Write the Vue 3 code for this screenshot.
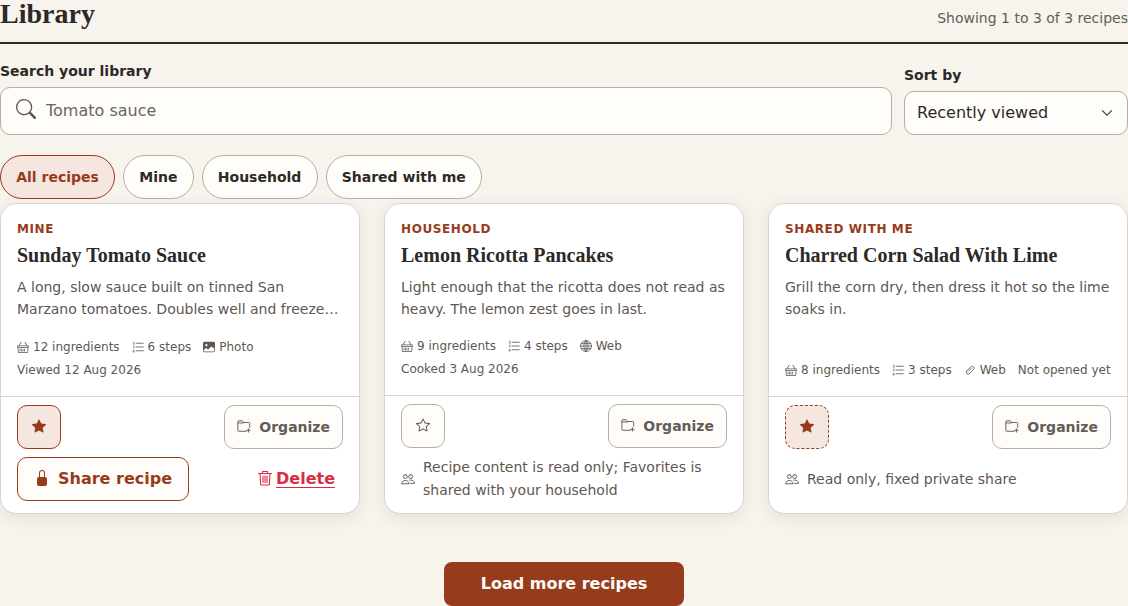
<script setup>
const icons = {
  search: { fill: true, d: 'M11.742 10.344a6.5 6.5 0 1 0-1.397 1.398h-.001q.044.06.098.115l3.85 3.85a1 1 0 0 0 1.415-1.414l-3.85-3.85a1 1 0 0 0-.115-.1zM12 6.5a5.5 5.5 0 1 1-11 0 5.5 5.5 0 0 1 11 0' },
  chevron: { fill: true, d: 'M1.646 4.646a.5.5 0 0 1 .708 0L8 10.293l5.646-5.647a.5.5 0 0 1 .708.708l-6 6a.5.5 0 0 1-.708 0l-6-6a.5.5 0 0 1 0-.708' },
  starFill: { fill: true, d: 'M3.612 15.443c-.386.198-.824-.149-.746-.592l.83-4.73L.173 6.765c-.329-.314-.158-.888.283-.95l4.898-.696L7.538.792c.197-.39.73-.39.927 0l2.184 4.327 4.898.696c.441.062.612.636.282.95l-3.522 3.356.83 4.73c.078.443-.36.79-.746.592L8 13.187l-4.389 2.256z' },
  star: { fill: true, d: 'M2.866 14.85c-.078.444.36.791.746.593l4.39-2.256 4.389 2.256c.386.198.824-.149.746-.592l-.83-4.73 3.522-3.356c.33-.314.16-.888-.282-.95l-4.898-.696L8.465.792a.513.513 0 0 0-.927 0L5.354 5.12l-4.898.696c-.441.062-.612.636-.283.95l3.523 3.356-.83 4.73zm4.905-2.767-3.686 1.894.694-3.957a.56.56 0 0 0-.163-.505L1.71 6.745l4.052-.576a.53.53 0 0 0 .393-.288L8 2.223l1.847 3.658a.53.53 0 0 0 .393.288l4.052.575-2.906 2.77a.56.56 0 0 0-.163.506l.694 3.957-3.686-1.894a.5.5 0 0 0-.461 0z' },
  lock: { fill: true, d: 'M8 1a2 2 0 0 1 2 2v4H6V3a2 2 0 0 1 2-2m3 6V3a3 3 0 0 0-6 0v4a2 2 0 0 0-2 2v5a2 2 0 0 0 2 2h6a2 2 0 0 0 2-2V9a2 2 0 0 0-2-2' },
  image: { fill: true, d: 'M.002 3a2 2 0 0 1 2-2h12a2 2 0 0 1 2 2v10a2 2 0 0 1-2 2H2a2 2 0 0 1-2-2V3zm1 9v1a1 1 0 0 0 1 1h12a1 1 0 0 0 1-1V9.500l-3.777-1.947a.5.500 0 0 0-.577.093l-3.710 3.710-2.660-1.772a.5.500 0 0 0-.630.062L1.002 12zm5-6.500a1.500 1.500 0 1 0-3 0 1.500 1.500 0 0 0 3 0z' },
  basket: { fill: true, d: 'M5.757 1.071a.5.5 0 0 1 .172.686L3.383 6h9.234L10.070 1.757a.5.5 0 1 1 .858-.514L13.783 6H15a1 1 0 0 1 1 1v1a1 1 0 0 1-1 1v4.500a2.500 2.500 0 0 1-2.500 2.500h-9A2.500 2.500 0 0 1 1 13.500V9a1 1 0 0 1-1-1V7a1 1 0 0 1 1-1h1.217L5.070 1.243a.5.5 0 0 1 .686-.172zM2 9v4.500A1.500 1.500 0 0 0 3.500 15h9a1.500 1.500 0 0 0 1.500-1.500V9zM1 7v1h14V7zm3 3a.5.5 0 0 1 .5.5v3a.5.5 0 0 1-1 0v-3A.5.5 0 0 1 4 10m2 0a.5.5 0 0 1 .5.5v3a.5.5 0 0 1-1 0v-3A.5.5 0 0 1 6 10m2 0a.5.5 0 0 1 .5.5v3a.5.5 0 0 1-1 0v-3a.5.5 0 0 1 .5-.5m2 0a.5.5 0 0 1 .5.5v3a.5.5 0 0 1-1 0v-3a.5.5 0 0 1 .5-.5' },
  list: { d: 'M5.500 3h9.500M5.500 8h9.500M5.500 13h9.500M2.500 1.500v3M2.500 6.500v3M1.500 13h1.500M1.500 14.500h1.500' },
  globe: { d: 'M8 .75a7.250 7.250 0 1 0 0 14.500A7.250 7.250 0 0 0 8 .75zM8 .75c-4 4-4 10.500 0 14.500M8 .75c4 4 4 10.500 0 14.500M8 .75v14.500M.75 8h14.500M1.800 4.500h12.400M1.800 11.500h12.400' },
  clip: { d: 'M3.500 9.500 9.500 3.500a2.500 2.500 0 0 1 3.500 3.500L7 13a2.500 2.500 0 0 1-3.500-3.500zM6 9.500 10 5.500' },
  folder: { d: 'M14.500 9.500V5a1 1 0 0 0-1-1H7.500L6 2H2a1 1 0 0 0-1 1v10a1 1 0 0 0 1 1h8.500M1 4.500h6.500M13 11v4M11 13h4' },
  people: { d: 'M5 3a2.200 2.200 0 1 0 0 4.400A2.200 2.200 0 0 0 5 3zM11 3a2.200 2.200 0 1 0 0 4.400A2.200 2.200 0 0 0 11 3zM.75 13c0-4.500 8.500-4.500 8.500 0zM10 9.200c2.500-.5 5.250.8 5.250 3.800h-4' },
  trash: { d: 'M1.500 3.500h13M5.500 3.500V1.500h5v2M3 3.500 3.600 14a1 1 0 0 0 1 1h6.800a1 1 0 0 0 1-1L13 3.500M6 6v6.500M8 6v6.500M10 6v6.500' },
}

const tabs = ['All recipes', 'Mine', 'Household', 'Shared with me']

const recipes = [
  {
    owner: 'Mine',
    title: 'Sunday Tomato Sauce',
    text: 'A long, slow sauce built on tinned San Marzano tomatoes. Doubles well and freezes beautifully for the weeks ahead.',
    meta: [
      { icon: 'basket', label: '12 ingredients' },
      { icon: 'list', label: '6 steps' },
      { icon: 'image', label: 'Photo' },
      { label: 'Viewed 12 Aug 2026' },
    ],
    favorite: 'on',
    editable: true,
  },
  {
    owner: 'Household',
    title: 'Lemon Ricotta Pancakes',
    text: 'Light enough that the ricotta does not read as heavy. The lemon zest goes in last.',
    meta: [
      { icon: 'basket', label: '9 ingredients' },
      { icon: 'list', label: '4 steps' },
      { icon: 'globe', label: 'Web' },
      { label: 'Cooked 3 Aug 2026' },
    ],
    favorite: 'off',
    note: 'Recipe content is read only; Favorites is shared with your household',
  },
  {
    owner: 'Shared with me',
    title: 'Charred Corn Salad With Lime',
    text: 'Grill the corn dry, then dress it hot so the lime soaks in.',
    meta: [
      { icon: 'basket', label: '8 ingredients' },
      { icon: 'list', label: '3 steps' },
      { icon: 'clip', label: 'Web' },
      { label: 'Not opened yet' },
    ],
    favorite: 'locked',
    note: 'Read only, fixed private share',
  },
]
</script>

<template>
  <main class="page">
    <header class="head">
      <h1>Library</h1>
      <p class="count">Showing 1 to 3 of 3 recipes</p>
    </header>

    <section class="filters">
      <label class="field grow">
        <span class="label">Search your library</span>
        <span class="control">
          <svg class="search-icon" viewBox="0 0 16 16"><path :d="icons.search.d" fill="currentColor" /></svg>
          <input class="search" type="search" placeholder="Tomato sauce" />
        </span>
      </label>
      <label class="field sort">
        <span class="label">Sort by</span>
        <span class="control">
          <select class="select">
            <option>Recently viewed</option>
          </select>
          <svg class="chev" viewBox="0 0 16 16"><path :d="icons.chevron.d" fill="currentColor" stroke="currentColor" stroke-width="0.6" /></svg>
        </span>
      </label>
    </section>

    <nav class="tabs">
      <button v-for="(t, i) in tabs" :key="t" class="tab" :class="{ active: i === 0 }">{{ t }}</button>
    </nav>

    <section class="grid">
      <article v-for="r in recipes" :key="r.title" class="card">
        <div class="body">
          <div class="eyebrow">{{ r.owner }}</div>
          <h2>{{ r.title }}</h2>
          <p class="desc">{{ r.text }}</p>
          <ul class="meta">
            <li v-for="m in r.meta" :key="m.label">
              <svg v-if="m.icon" class="mi" viewBox="0 0 16 16">
                <path :d="icons[m.icon].d" :class="icons[m.icon].fill ? 'f' : 's'" />
              </svg>
              {{ m.label }}
            </li>
          </ul>
        </div>
        <div class="foot">
          <div class="row">
            <button class="fav" :class="r.favorite" aria-label="Favorite">
              <svg viewBox="0 0 16 16"><path :d="r.favorite === 'off' ? icons.star.d : icons.starFill.d" fill="currentColor" /></svg>
            </button>
            <button class="organize">
              <svg viewBox="0 0 16 16"><path :d="icons.folder.d" class="s" /></svg>
              Organize
            </button>
          </div>
          <div v-if="r.editable" class="row">
            <button class="share">
              <svg viewBox="0 0 16 16"><path :d="icons.lock.d" fill="currentColor" /></svg>
              Share recipe
            </button>
            <button class="delete">
              <svg viewBox="0 0 16 16"><path :d="icons.trash.d" class="s" /></svg>
              <span>Delete</span>
            </button>
          </div>
          <div v-else class="note">
            <svg viewBox="0 0 16 16"><path :d="icons.people.d" class="s" /></svg>
            <span>{{ r.note }}</span>
          </div>
        </div>
      </article>
    </section>

    <div class="more">
      <button class="load">Load more recipes</button>
    </div>
  </main>
</template>

<style>
html, body { margin: 0; background: #f7f4ee; }
</style>

<style scoped>
.page {
  width: 1128px;
  height: 606px;
  overflow: hidden;
  font-family: "DejaVu Sans", sans-serif;
  color: #2d2926;
  background: #f7f4ee;
}
button { font-family: inherit; cursor: pointer; }
.head {
  display: flex;
  justify-content: space-between;
  align-items: flex-end;
  height: 42px;
  border-bottom: 2px solid #2d2926;
}
h1 {
  margin: 0 0 14px;
  font: bold 28px/28px "Liberation Serif", serif;
}
.count {
  margin: 0 0 14px;
  font-size: 14px;
  line-height: 20px;
  color: #645c56;
}
.filters {
  display: flex;
  align-items: flex-end;
  gap: 12px;
  margin-top: 16px;
}
.field { display: flex; flex-direction: column; gap: 5px; }
.grow { flex: 1; }
.sort { width: 224px; }
.label { font-size: 14px; font-weight: 700; line-height: 22px; }
.control { position: relative; display: block; }
.search, .select {
  display: block;
  box-sizing: border-box;
  width: 100%;
  margin: 0;
  background: #fffdf9;
  border: 1px solid #b8aea4;
  border-radius: 10px;
  font-family: inherit;
  font-size: 16px;
  outline: none;
}
.search {
  height: 48px;
  padding: 0 12px 2px 45px;
  color: #2d2926;
  appearance: none;
}
.search::placeholder { color: #6b6560; opacity: 1; }
.search-icon {
  position: absolute;
  left: 16px;
  top: 12px;
  width: 20px;
  height: 20px;
  color: #5f5751;
}
.select {
  height: 44px;
  padding: 0 32px 2px 12px;
  color: #2d2926;
  appearance: none;
}
.chev {
  position: absolute;
  right: 15px;
  top: 16px;
  width: 12px;
  height: 12px;
  color: #2d2926;
}
.tabs { display: flex; gap: 8px; margin-top: 20px; }
.tab {
  height: 44px;
  padding: 0 15.2px;
  background: #fffdf9;
  border: 1px solid #b8aea4;
  border-radius: 22px;
  color: #2d2926;
  font-size: 14px;
  font-weight: 700;
}
.tab.active {
  background: #f5e6e0;
  border-color: #963c1c;
  color: #963c1c;
}
.grid {
  display: grid;
  grid-template-columns: repeat(3, 1fr);
  gap: 24px;
  margin-top: 4px;
}
.card {
  display: flex;
  flex-direction: column;
  background: #fff;
  border: 1px solid #dcd5cd;
  border-radius: 16px;
  box-shadow: 0 4px 16px rgba(45, 41, 38, 0.1);
  overflow: hidden;
}
.body {
  flex: 1;
  display: flex;
  flex-direction: column;
  padding: 16px;
}
.eyebrow {
  font-size: 12px;
  font-weight: 700;
  line-height: 19px;
  letter-spacing: 0.6px;
  text-transform: uppercase;
  color: #963c1c;
}
h2 {
  margin: 2px 0 0;
  font: bold 20px/28px "Liberation Serif", serif;
}
.desc {
  margin: 7px 0 0;
  font-size: 14px;
  line-height: 22.4px;
  color: #5f5751;
  display: -webkit-box;
  -webkit-box-orient: vertical;
  -webkit-line-clamp: 2;
  overflow: hidden;
}
.meta {
  list-style: none;
  margin: auto 0 0;
  padding: 16px 0 0;
  display: flex;
  flex-wrap: wrap;
  gap: 4px 12px;
  font-size: 12px;
  line-height: 19.2px;
  color: #5f5751;
}
.meta li { display: flex; align-items: center; gap: 4px; }
.mi { width: 12px; height: 12px; }
.s { fill: none; stroke: currentColor; stroke-width: 1.1; stroke-linecap: round; stroke-linejoin: round; }
.f { fill: currentColor; }
.foot {
  display: flex;
  flex-direction: column;
  gap: 8px;
  padding: 8px 16px 12px;
  border-top: 1px solid #dcd5cd;
}
.row { display: flex; justify-content: space-between; align-items: center; }
.fav {
  width: 44px;
  height: 44px;
  display: flex;
  align-items: center;
  justify-content: center;
  padding: 0 0 2px;
  background: #fffdf9;
  border: 1px solid #b8aea4;
  border-radius: 10px;
  color: #5f5751;
}
.fav svg { width: 14px; height: 14px; }
.fav.on { background: #f5e6e0; border-color: #963c1c; color: #963c1c; }
.fav.locked { background: #f5e6e0; border: 1px dashed #963c1c; color: #963c1c; }
.organize {
  height: 44px;
  display: flex;
  align-items: center;
  gap: 8px;
  padding: 0 12px;
  background: #fffdf9;
  border: 1px solid #b8aea4;
  border-radius: 10px;
  color: #645c56;
  font-size: 14px;
  font-weight: 700;
}
.organize svg { width: 14px; height: 14px; margin-bottom: 2px; }
.share {
  height: 44px;
  display: flex;
  align-items: center;
  gap: 8px;
  padding: 0 16px 2px;
  background: #fffdf9;
  border: 1px solid #963c1c;
  border-radius: 10px;
  color: #963c1c;
  font-size: 16px;
  font-weight: 700;
}
.share svg { width: 16px; height: 16px; }
.delete {
  display: flex;
  align-items: center;
  gap: 3px;
  padding: 0 8px 2px;
  background: none;
  border: 0;
  color: #d92d45;
  font-size: 16px;
  font-weight: 700;
}
.delete svg { width: 16px; height: 16px; }
.delete span { text-decoration: underline; text-underline-offset: 3px; }
.note {
  min-height: 44px;
  display: flex;
  align-items: center;
  gap: 8px;
  font-size: 14px;
  line-height: 22.4px;
  color: #5f5751;
}
.note svg { flex: none; width: 14px; height: 14px; }
.more { display: flex; justify-content: center; margin-top: 48px; }
.load {
  width: 240px;
  height: 44px;
  padding: 0 0 2px;
  background: #963c1c;
  border: 0;
  border-radius: 8px;
  color: #fffdf9;
  font-size: 16px;
  font-weight: 700;
}
</style>
